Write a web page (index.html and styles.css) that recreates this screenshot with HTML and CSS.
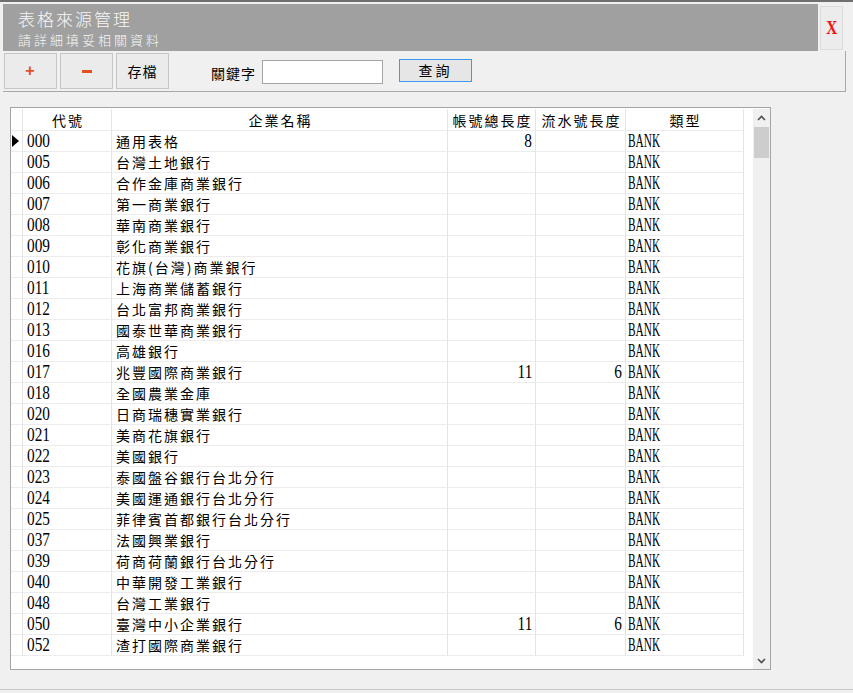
FILE: index.html
```html
<!DOCTYPE html>
<html lang="zh-Hant">
<head>
<meta charset="utf-8">
<title>表格來源管理</title>
<link rel="stylesheet" href="styles.css">
</head>
<body>
<div class="app">
  <div class="topline"></div>
  <div class="header">
    <div class="titlebox">
      <div class="title">表格來源管理</div>
      <div class="subtitle">請詳細填妥相關資料</div>
    </div>
    <button class="close"><span>X</span></button>
  </div>
  <div class="toolbar">
    <button class="tb"><span class="plus">+</span></button>
    <button class="tb"><span class="minus"></span></button>
    <button class="tb save">存檔</button>
    <label class="kw-label">關鍵字</label>
    <input class="kw-input" type="text">
    <button class="query">查詢</button>
  </div>
  <div class="grid">
    <div class="grid-body">
      <div class="cells">
        <div class="c h rh"></div><div class="c h">代號</div><div class="c h">企業名稱</div><div class="c h">帳號總長度</div><div class="c h">流水號長度</div><div class="c h">類型</div>

        <div class="c rh"><span class="arrow"></span></div><div class="c code"><span class="lat">000</span></div><div class="c name">通用表格</div><div class="c r"><span class="lat rt">8</span></div><div class="c r"></div><div class="c type"><span class="bank">BANK</span></div>
        <div class="c rh"></div><div class="c code"><span class="lat">005</span></div><div class="c name">台灣土地銀行</div><div class="c r"></div><div class="c r"></div><div class="c type"><span class="bank">BANK</span></div>
        <div class="c rh"></div><div class="c code"><span class="lat">006</span></div><div class="c name">合作金庫商業銀行</div><div class="c r"></div><div class="c r"></div><div class="c type"><span class="bank">BANK</span></div>
        <div class="c rh"></div><div class="c code"><span class="lat">007</span></div><div class="c name">第一商業銀行</div><div class="c r"></div><div class="c r"></div><div class="c type"><span class="bank">BANK</span></div>
        <div class="c rh"></div><div class="c code"><span class="lat">008</span></div><div class="c name">華南商業銀行</div><div class="c r"></div><div class="c r"></div><div class="c type"><span class="bank">BANK</span></div>
        <div class="c rh"></div><div class="c code"><span class="lat">009</span></div><div class="c name">彰化商業銀行</div><div class="c r"></div><div class="c r"></div><div class="c type"><span class="bank">BANK</span></div>
        <div class="c rh"></div><div class="c code"><span class="lat">010</span></div><div class="c name">花旗(台灣)商業銀行</div><div class="c r"></div><div class="c r"></div><div class="c type"><span class="bank">BANK</span></div>
        <div class="c rh"></div><div class="c code"><span class="lat">011</span></div><div class="c name">上海商業儲蓄銀行</div><div class="c r"></div><div class="c r"></div><div class="c type"><span class="bank">BANK</span></div>
        <div class="c rh"></div><div class="c code"><span class="lat">012</span></div><div class="c name">台北富邦商業銀行</div><div class="c r"></div><div class="c r"></div><div class="c type"><span class="bank">BANK</span></div>
        <div class="c rh"></div><div class="c code"><span class="lat">013</span></div><div class="c name">國泰世華商業銀行</div><div class="c r"></div><div class="c r"></div><div class="c type"><span class="bank">BANK</span></div>
        <div class="c rh"></div><div class="c code"><span class="lat">016</span></div><div class="c name">高雄銀行</div><div class="c r"></div><div class="c r"></div><div class="c type"><span class="bank">BANK</span></div>
        <div class="c rh"></div><div class="c code"><span class="lat">017</span></div><div class="c name">兆豐國際商業銀行</div><div class="c r"><span class="lat rt">11</span></div><div class="c r"><span class="lat rt">6</span></div><div class="c type"><span class="bank">BANK</span></div>
        <div class="c rh"></div><div class="c code"><span class="lat">018</span></div><div class="c name">全國農業金庫</div><div class="c r"></div><div class="c r"></div><div class="c type"><span class="bank">BANK</span></div>
        <div class="c rh"></div><div class="c code"><span class="lat">020</span></div><div class="c name">日商瑞穗實業銀行</div><div class="c r"></div><div class="c r"></div><div class="c type"><span class="bank">BANK</span></div>
        <div class="c rh"></div><div class="c code"><span class="lat">021</span></div><div class="c name">美商花旗銀行</div><div class="c r"></div><div class="c r"></div><div class="c type"><span class="bank">BANK</span></div>
        <div class="c rh"></div><div class="c code"><span class="lat">022</span></div><div class="c name">美國銀行</div><div class="c r"></div><div class="c r"></div><div class="c type"><span class="bank">BANK</span></div>
        <div class="c rh"></div><div class="c code"><span class="lat">023</span></div><div class="c name">泰國盤谷銀行台北分行</div><div class="c r"></div><div class="c r"></div><div class="c type"><span class="bank">BANK</span></div>
        <div class="c rh"></div><div class="c code"><span class="lat">024</span></div><div class="c name">美國運通銀行台北分行</div><div class="c r"></div><div class="c r"></div><div class="c type"><span class="bank">BANK</span></div>
        <div class="c rh"></div><div class="c code"><span class="lat">025</span></div><div class="c name">菲律賓首都銀行台北分行</div><div class="c r"></div><div class="c r"></div><div class="c type"><span class="bank">BANK</span></div>
        <div class="c rh"></div><div class="c code"><span class="lat">037</span></div><div class="c name">法國興業銀行</div><div class="c r"></div><div class="c r"></div><div class="c type"><span class="bank">BANK</span></div>
        <div class="c rh"></div><div class="c code"><span class="lat">039</span></div><div class="c name">荷商荷蘭銀行台北分行</div><div class="c r"></div><div class="c r"></div><div class="c type"><span class="bank">BANK</span></div>
        <div class="c rh"></div><div class="c code"><span class="lat">040</span></div><div class="c name">中華開發工業銀行</div><div class="c r"></div><div class="c r"></div><div class="c type"><span class="bank">BANK</span></div>
        <div class="c rh"></div><div class="c code"><span class="lat">048</span></div><div class="c name">台灣工業銀行</div><div class="c r"></div><div class="c r"></div><div class="c type"><span class="bank">BANK</span></div>
        <div class="c rh"></div><div class="c code"><span class="lat">050</span></div><div class="c name">臺灣中小企業銀行</div><div class="c r"><span class="lat rt">11</span></div><div class="c r"><span class="lat rt">6</span></div><div class="c type"><span class="bank">BANK</span></div>
        <div class="c rh"></div><div class="c code"><span class="lat">052</span></div><div class="c name">渣打國際商業銀行</div><div class="c r"></div><div class="c r"></div><div class="c type"><span class="bank">BANK</span></div>
      </div>
      <div class="scrollbar">
        <div class="sb-btn">
          <svg width="9" height="6" viewBox="0 0 9 6"><path d="M1 5 L4.5 1.5 L8 5" fill="none" stroke="#505050" stroke-width="1.6"/></svg>
        </div>
        <div class="sb-track"><div class="sb-thumb"></div></div>
        <div class="sb-btn">
          <svg width="9" height="6" viewBox="0 0 9 6"><path d="M1 1 L4.5 4.5 L8 1" fill="none" stroke="#505050" stroke-width="1.6"/></svg>
        </div>
      </div>
    </div>
  </div>
  <div class="footer-line"></div>
</div>
</body>
</html>
```

FILE: styles.css
```css
* { box-sizing: border-box; }
html, body {
  margin: 0;
  padding: 0;
}
body {
  width: 853px;
  height: 693px;
  overflow: hidden;
  background: #f0f0f0;
  font-family: "Noto Sans CJK TC", "Noto Sans", sans-serif;
  color: #000;
}
.app {
  display: flex;
  flex-direction: column;
  height: 693px;
}
.topline {
  height: 2px;
  background: #6f6f6f;
}
.header {
  display: flex;
  margin: 2px 0 0 3px;
  height: 47px;
}
.titlebox {
  width: 815px;
  background: #a0a0a0;
  padding: 4px 0 0 15px;
  color: #f7f7f7;
  font-weight: 300;
}
.title {
  font-size: 17px;
  line-height: 22px;
  letter-spacing: 2px;
}
.subtitle {
  font-size: 13px;
  line-height: 18px;
  letter-spacing: 3px;
  margin-top: 1px;
}
.close {
  width: 23px;
  height: 44px;
  margin: 2px 0 0 2px;
  padding: 0;
  border: 1px solid #dcdcdc;
  background: #ececec;
  display: flex;
  align-items: center;
  justify-content: center;
}
.close span {
  font-family: "Liberation Serif", serif;
  font-weight: bold;
  font-size: 19px;
  color: #ff1010;
  display: inline-block;
  transform: scaleX(0.8);
}
.toolbar {
  display: flex;
  align-items: flex-start;
  margin-left: 3px;
  width: 843px;
  height: 41px;
  padding: 2px 0 0 1px;
  border-right: 1px solid #a8a8a8;
  border-bottom: 1px solid #a8a8a8;
}
.tb {
  width: 53px;
  height: 36px;
  margin-right: 3px;
  padding: 0;
  border: 1px solid #c6c6c6;
  background: #ebebeb;
  display: flex;
  align-items: center;
  justify-content: center;
  font-family: "Noto Sans CJK TC", sans-serif;
  font-size: 14px;
  letter-spacing: 1px;
  color: #000;
}
.plus {
  font-family: "Liberation Sans", sans-serif;
  font-weight: bold;
  font-size: 16px;
  color: #e4501c;
  line-height: 1;
}
.minus {
  display: block;
  width: 10px;
  height: 3px;
  background: #e4501c;
}
.kw-label {
  font-size: 14px;
  letter-spacing: 1px;
  margin: 10px 0 0 39px;
  line-height: 20px;
}
.kw-input {
  width: 121px;
  height: 24px;
  margin: 7px 0 0 6px;
  border: 1px solid #a5a5a5;
  background: #fff;
  padding: 0;
}
.query {
  width: 73px;
  height: 23px;
  margin: 6px 0 0 16px;
  padding: 0;
  border: 1px solid #3c98f0;
  background: #e6e6e6;
  font-family: "Noto Sans CJK TC", sans-serif;
  font-size: 14px;
  letter-spacing: 3px;
  line-height: 19px;
  color: #000;
}
.grid {
  margin: 15px 0 0 10px;
  width: 761px;
  height: 563px;
  border: 1px solid #a4a4a4;
  background: #fff;
}
.grid-body {
  display: flex;
  height: 100%;
  padding-top: 1px;
}
.cells {
  width: 741px;
  display: grid;
  grid-template-columns: 12px 89px 336px 88px 90px 118px;
  grid-template-rows: 22px;
  grid-auto-rows: 21px;
  align-content: start;
}
.c {
  border-right: 1px solid #e4e4e4;
  border-bottom: 1px solid #ececec;
  overflow: hidden;
  white-space: nowrap;
  display: flex;
  align-items: center;
}
.h {
  justify-content: center;
  font-size: 14px;
  letter-spacing: 2px;
  padding-left: 2px;
}
.rh {
  padding-left: 1px;
}
.arrow {
  width: 0;
  height: 0;
  border-top: 6px solid transparent;
  border-bottom: 6px solid transparent;
  border-left: 7px solid #000;
}
.code {
  padding-left: 4px;
}
.name {
  padding-left: 4px;
  font-size: 14px;
  letter-spacing: 2px;
}
.r {
  justify-content: flex-end;
  padding-right: 3px;
}
.type {
  padding-left: 2px;
}
.lat {
  font-family: "Liberation Serif", serif;
  font-size: 18px;
  display: inline-block;
  transform: scaleX(0.85);
  transform-origin: left center;
  line-height: 20px;
}
.lat.rt {
  transform-origin: right center;
}
.bank {
  font-family: "Liberation Serif", serif;
  font-size: 18px;
  display: inline-block;
  transform: scaleX(0.63);
  transform-origin: left center;
  line-height: 20px;
}
.scrollbar {
  margin-left: 1px;
  width: 17px;
  display: flex;
  flex-direction: column;
  background: #f0f0f0;
}
.sb-btn {
  height: 17px;
  display: flex;
  align-items: center;
  justify-content: center;
}
.sb-track {
  flex: 1;
  padding-top: 1px;
}
.sb-thumb {
  margin: 0 1px;
  height: 31px;
  background: #cdcdcd;
}
.footer-line {
  margin-top: 19px;
  height: 1px;
  background: #c8c8c8;
}
```
